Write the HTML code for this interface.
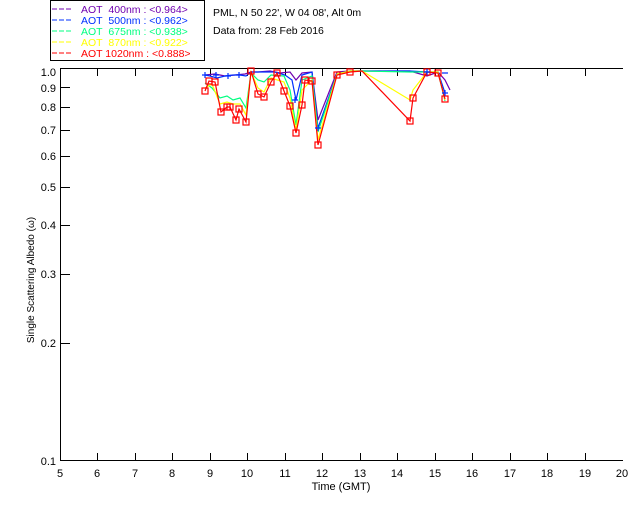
<!DOCTYPE html>
<html><head><style>
html,body{margin:0;padding:0;background:#fff;}
svg{display:block;font-family:"Liberation Sans",sans-serif;}
</style></head><body>
<svg width="640" height="512" xmlns="http://www.w3.org/2000/svg">
<rect width="640" height="512" fill="#fff"/>
<rect x="50.5" y="0.5" width="154" height="60" fill="none" stroke="#000"/>
<g font-size="10.5">
<line x1="52" y1="9" x2="73" y2="9" stroke="#7000b0" stroke-dasharray="5,2"/>
<text x="81" y="13" fill="#7000b0">AOT&#160;&#160;400nm : &lt;0.964&gt;</text>
<line x1="52" y1="20" x2="73" y2="20" stroke="#0030ff" stroke-dasharray="5,2"/>
<text x="81" y="24" fill="#0030ff">AOT&#160;&#160;500nm : &lt;0.962&gt;</text>
<line x1="52" y1="31" x2="73" y2="31" stroke="#00ff80" stroke-dasharray="5,2"/>
<text x="81" y="35" fill="#00ff80">AOT&#160;&#160;675nm : &lt;0.938&gt;</text>
<line x1="52" y1="42" x2="73" y2="42" stroke="#ffff00" stroke-dasharray="5,2"/>
<text x="81" y="46" fill="#ffff00">AOT&#160;&#160;870nm : &lt;0.922&gt;</text>
<line x1="52" y1="53" x2="73" y2="53" stroke="#ff0000" stroke-dasharray="5,2"/>
<text x="81" y="57" fill="#ff0000">AOT 1020nm : &lt;0.888&gt;</text>
<text x="213" y="16" fill="#000">PML, N 50 22', W 04 08', Alt 0m</text>
<text x="213" y="34" fill="#000">Data from: 28 Feb 2016</text>
</g>
<g stroke="#000" stroke-width="1" fill="none">
<line x1="60" y1="68.5" x2="623" y2="68.5"/>
<line x1="60.5" y1="68" x2="60.5" y2="461"/>
<line x1="60" y1="460.5" x2="623" y2="460.5"/>
<path d="M60 87.5h10M60 107.5h10M60 130.5h10M60 156.5h10M60 187.5h10M60 225.5h10M60 274.5h10M60 343.5h10"/>
<path d="M97.5 461v-8M135.5 461v-8M172.5 461v-8M210.5 461v-8M247.5 461v-8M285.5 461v-8M322.5 461v-8M360.5 461v-8M397.5 461v-8M435.5 461v-8M472.5 461v-8M510.5 461v-8M547.5 461v-8M585.5 461v-8"/>
<path d="M97.5 68v8M135.5 68v8M172.5 68v8M210.5 68v8M247.5 68v8M285.5 68v8M322.5 68v8M360.5 68v8M397.5 68v8M435.5 68v8M472.5 68v8M510.5 68v8M547.5 68v8M585.5 68v8"/>
</g>
<g font-size="11" fill="#000" text-anchor="end">
<text x="56" y="76">1.0</text><text x="56" y="92">0.9</text><text x="56" y="111">0.8</text>
<text x="56" y="134">0.7</text><text x="56" y="160">0.6</text><text x="56" y="191">0.5</text>
<text x="56" y="229">0.4</text><text x="56" y="278">0.3</text><text x="56" y="347">0.2</text>
<text x="56" y="465">0.1</text>
</g>
<g font-size="11" fill="#000" text-anchor="middle">
<text x="60" y="477">5</text><text x="97" y="477">6</text><text x="135" y="477">7</text><text x="172" y="477">8</text>
<text x="210" y="477">9</text><text x="247" y="477">10</text><text x="285" y="477">11</text><text x="322" y="477">12</text>
<text x="360" y="477">13</text><text x="397" y="477">14</text><text x="435" y="477">15</text><text x="472" y="477">16</text>
<text x="510" y="477">17</text><text x="547" y="477">18</text><text x="585" y="477">19</text><text x="622" y="477">20</text>
<text x="341" y="490">Time (GMT)</text>
<text font-size="10" transform="translate(34,280) rotate(-90)">Single Scattering Albedo (ω)</text>
</g>
<g fill="none" stroke-width="1.2">
<polyline stroke="#7000b0" points="205,75 215,74 225,76 235,75 245,74 251,72 258,72 270,71 280,73 290,72 296,80 302,73 312,72 318,120 337,72 350,71 362,71 410,71 427,76 438,72 445,80 450,90"/>
<polyline stroke="#0030ff" points="205,75 210,76 217,78 225,76 233,75 240,75 246,76 251,72 260,72 275,72 285,75 292,80 296,100 302,75 312,72 318,128 337,74 350,71 362,71 410,71 427,72 438,72 445,93"/>
<polyline stroke="#00ff80" points="205,83 212,88 220,98 227,96 233,100 240,98 246,108 251,73 258,80 264,82 271,75 284,76 290,90 296,125 302,80 312,76 318,132 337,74 350,71 362,71 410,72 427,72 438,72 445,101"/>
<polyline stroke="#ffff00" points="205,88 212,84 220,104 227,102 233,104 240,104 246,115 251,72 258,88 264,92 271,78 284,82 290,98 296,130 302,90 312,80 318,140 337,74 350,71 362,71 410,100 413,90 427,72 438,72 445,100"/>
<polyline stroke="#ff0000" points="205,91 209,81 215,82 221,112 227,107 230,107 236,120 239,109 246,122 251,71 258,94 264,97 271,82 277,73 284,91 290,106 296,133 302,105 305,80 312,81 318,145 337,75 350,72 362,71 410,121 413,98 427,72 438,73 445,99"/>
</g>
<g fill="none" stroke="#ff0000" stroke-width="1.2">
<rect x="202" y="88" width="6" height="6"/><rect x="206" y="78" width="6" height="6"/><rect x="212" y="79" width="6" height="6"/>
<rect x="218" y="109" width="6" height="6"/><rect x="224" y="104" width="6" height="6"/><rect x="227" y="104" width="6" height="6"/>
<rect x="233" y="117" width="6" height="6"/><rect x="236" y="106" width="6" height="6"/><rect x="243" y="119" width="6" height="6"/>
<rect x="248" y="68" width="6" height="6"/><rect x="255" y="91" width="6" height="6"/><rect x="261" y="94" width="6" height="6"/>
<rect x="268" y="79" width="6" height="6"/><rect x="274" y="70" width="6" height="6"/><rect x="281" y="88" width="6" height="6"/>
<rect x="287" y="103" width="6" height="6"/><rect x="293" y="130" width="6" height="6"/><rect x="299" y="102" width="6" height="6"/>
<rect x="302" y="77" width="6" height="6"/><rect x="309" y="78" width="6" height="6"/><rect x="315" y="142" width="6" height="6"/>
<rect x="334" y="72" width="6" height="6"/><rect x="347" y="69" width="6" height="6"/><rect x="407" y="118" width="6" height="6"/>
<rect x="410" y="95" width="6" height="6"/><rect x="424" y="69" width="6" height="6"/><rect x="435" y="70" width="6" height="6"/>
<rect x="442" y="96" width="6" height="6"/>
</g>
<g stroke="#0030ff" stroke-width="1.2">
<path d="M202 75h6M205 72v6M213 75h6M216 72v6M225 76h6M228 73v6M236 75h6M239 72v6M292 100h6M295 97v6M315 128h6M318 125v6M424 72h6M427 69v6M442 93h6M445 90v6M442 73h6"/>
</g>
</svg>
</body></html>
